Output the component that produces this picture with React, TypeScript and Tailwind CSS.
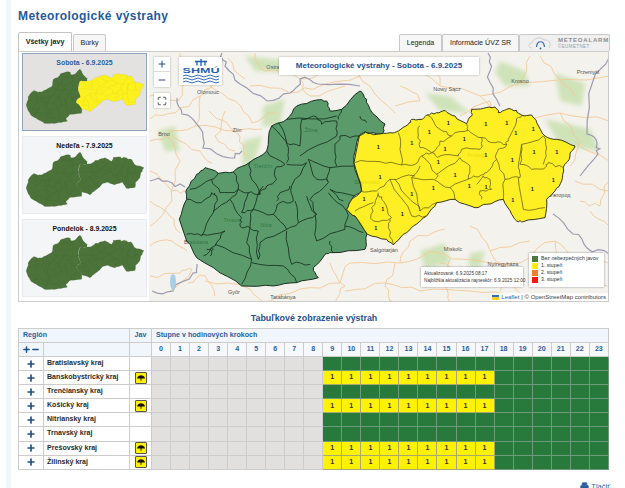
import React from "react";
import { Plus, Minus, Printer, Maximize } from "lucide-react";

const GREEN_OUTLINE =
  "28,400 50,340 50,310 80,265 105,245 145,262 190,258 240,228 290,195 305,120 350,100 380,60 440,42 470,45 480,75 515,70 570,15 590,40 600,70 645,114 639,141 621,144 585,138 567,150 552,231 576,315 546,339 531,369 555,390 591,444 585,490 485,500 465,505 430,545 445,575 380,590 310,600 215,600 130,545 80,515 50,465";

const GREEN_LINES = [
  "60,310 125,280 145,262",
  "50,340 95,350 125,320 140,330 130,380 95,450 50,445",
  "125,280 150,320 205,310 190,258",
  "205,310 180,340 130,375",
  "180,340 215,395 210,420 240,425",
  "205,310 235,320 270,325 240,265 240,228",
  "270,325 290,300 320,280 315,250 345,235 290,195",
  "235,320 215,380 250,370 280,300",
  "250,370 240,425 265,435 265,520",
  "250,370 310,385 330,350 370,345 365,300 410,230 350,235",
  "310,385 350,430 385,410 375,345",
  "360,300 330,320 320,345",
  "385,410 440,385 410,330",
  "440,385 420,340 475,290 480,245 415,220",
  "415,220 440,280 475,285",
  "350,435 365,535 420,535",
  "350,430 270,470 265,520",
  "240,425 230,470 245,520 215,595",
  "135,475 245,520",
  "100,510 135,480 165,435 95,445",
  "110,490 130,490 120,510",
  "245,530 340,540 380,590",
  "480,310 520,345",
  "475,320 530,375 525,430 440,465 435,385",
  "525,420 580,440",
  "490,500 480,465",
  "305,120 355,185 350,230",
  "325,110 350,170 390,180 395,100",
  "350,100 500,90",
  "395,100 430,90 455,115 500,105",
  "390,210 500,150 500,105",
  "500,240 495,185 510,150 570,150",
  "515,70 505,100",
  "570,90 590,110",
  "555,240 480,245",
  "555,330 480,310",
];

const YELLOW_OUTLINE =
  "58,105 75,92 110,100 150,95 175,90 205,70 215,55 240,55 260,42 290,35 315,28 345,45 380,68 395,45 395,25 430,22 465,18 475,35 500,25 530,28 545,42 575,42 590,65 615,105 650,115 705,135 690,165 670,200 665,240 645,270 620,295 615,350 550,362 530,360 515,340 490,295 440,310 405,320 345,295 290,305 260,345 220,375 190,400 160,432 140,415 82,400 45,345 20,325 35,295 65,270 42,185";

const YELLOW_LINES = [
  "44,185 120,182 185,192 225,190 245,165 275,155 300,120 335,105 300,85 262,42",
  "175,95 180,145 185,192",
  "240,75 235,100 240,140 275,155",
  "335,105 385,88 425,110 420,145 365,145 355,165 300,165 275,155",
  "380,68 385,88",
  "425,110 465,125 500,130 505,115 530,60 545,42",
  "500,130 475,145 470,175 495,235 540,230 535,200 545,130 610,105",
  "545,130 540,190 575,205 620,195 625,185 670,200",
  "610,105 620,140 610,190",
  "535,230 550,325 615,320",
  "495,235 490,295",
  "240,195 215,230 240,330 290,305",
  "215,230 280,235 330,260 345,295",
  "330,260 395,230 420,225 440,215 470,175",
  "360,170 390,195 385,235",
  "245,165 290,220 360,170",
  "290,220 285,235",
  "60,270 110,270 150,235 225,225",
  "150,235 215,345 258,345",
  "165,235 210,295 240,330",
  "115,275 95,320 100,360 155,350 130,300 115,280",
  "45,330 100,305",
  "150,355 145,380 160,430",
  "410,250 430,225 450,235 455,265 420,270 425,295",
];

const ONES = [
  [115, 137], [215, 127], [268, 93], [325, 67], [437, 70], [500, 65], [527, 97], [580, 83],
  [373, 115], [315, 145], [295, 183], [437, 162], [517, 178], [582, 152], [650, 152], [345, 222],
  [388, 255], [438, 257], [280, 260], [120, 228], [215, 280], [577, 263], [640, 237], [518, 298],
  [72, 295], [128, 323], [187, 340], [107, 380],
];

const ROADS = [
  "150,118 175,112 200,95 212,85 222,60",
  "210,85 235,100 252,122 275,112",
  "200,95 195,125 165,135 150,140",
  "195,125 235,130 262,128",
  "165,135 180,160 172,200 150,225",
  "150,170 172,190 188,190",
  "150,200 170,215 180,232",
  "150,245 172,240 187,250",
  "188,282 205,275 215,295",
  "150,275 180,272 192,268 170,290",
  "205,280 250,288 270,301",
  "260,301 300,288 340,282 350,262",
  "350,262 400,262 430,250 460,258 520,262",
  "345,290 385,282 420,290 470,290 520,295",
  "440,262 460,280 490,270 530,300",
  "400,262 410,240 445,228",
  "330,262 345,285 335,301",
  "395,262 385,285 395,301",
  "450,258 445,285 450,301",
  "490,250 505,270 500,290",
  "470,225 490,250 530,240",
  "520,262 555,240 575,258 609,262",
  "555,240 570,280 609,285",
  "255,52 265,70 300,78 345,62 390,58",
  "345,62 370,85 395,112",
  "400,60 440,85 480,95 520,82 609,75",
  "480,95 505,120 560,112 609,120",
  "440,85 435,55",
  "520,82 530,55",
  "505,120 490,100 460,115",
  "575,140 609,160",
  "575,180 609,190",
  "590,210 609,225",
  "250,85 290,92 320,85 360,75",
  "228,57 245,78",
  "209,110 240,135 245,155",
  "150,95 178,100 190,75 180,52",
  "172,135 200,150 212,162",
  "225,110 215,135 235,150",
  "300,78 310,95 345,85",
  "540,55 560,78 575,95",
  "560,112 580,140 570,165",
  "400,85 420,100 395,105",
  "580,200 600,205 609,180",
];

const BORDERS = [
  "222,52 225,65 240,83 267,100 290,92 300,78 318,83 360,85",
  "177,97 182,113 200,127 203,147 230,157 242,150",
  "150,180 167,180 185,186",
  "197,263 193,272 173,290 152,290",
  "488,52 490,70 493,93 500,105",
  "609,57 593,80 587,133 597,143 598,153 580,175",
  "553,213 573,233 587,247 609,253",
];

const FORESTS = [
  "500,60 525,70 530,85 505,85 495,72",
  "555,72 585,82 582,105 560,100",
  "545,118 590,128 600,150 560,145",
  "425,92 450,95 470,112 440,110",
  "420,250 445,242 450,262 425,268",
  "470,252 485,250 480,268 468,265",
  "263,105 285,98 280,125 262,125",
  "243,140 262,135 255,160 242,165",
  "245,55 290,60 300,72 255,70",
  "158,130 175,125 180,150 165,150",
];

const LABELS: [string, number, number][] = [
  ["Olomouc", 208, 93],
  ["Zlín", 237, 131],
  ["Brno", 164, 135],
  ["Ostrava", 276, 68],
  ["Nowy Sącz", 447, 90],
  ["Krosno", 520, 82],
  ["Przemyśl", 588, 73],
  ["Ужгород", 560, 196],
  ["Miskolc", 453, 250],
  ["Salgótarján", 384, 251],
  ["Nyíregyháza", 503, 265],
  ["Győr", 234, 293],
  ["Tatabánya", 283, 298],
  ["Žilina", 311, 131],
  ["Trenčín", 263, 167],
  ["Trnava", 232, 221],
  ["Nitra", 266, 226],
  ["Slovensko", 367, 183],
  ["Prešov", 476, 156],
  ["Bratislava", 196, 243],
];

// county borders are wiggly, so split each segment with a small sideways offset
const rough = (points: string, amp: number) => {
  let pts = points.split(" ").map((p) => p.split(",").map(Number));
  for (let pass = 0; pass < 2; pass++) {
    const next: number[][] = [];
    pts.forEach((p, i) => {
      next.push(p);
      const q = pts[i + 1];
      if (!q) return;
      const seed = Math.sin(p[0] * 12.9 + p[1] * 78.2 + q[0] * 37.7 + q[1] * 9.1) * 43758.5;
      const off = ((seed - Math.floor(seed)) * 2 - 1) * amp;
      const len = Math.hypot(q[0] - p[0], q[1] - p[1]) || 1;
      next.push([
        (p[0] + q[0]) / 2 + (-(q[1] - p[1]) / len) * off,
        (p[1] + q[1]) / 2 + ((q[0] - p[0]) / len) * off,
      ]);
    });
    pts = next;
  }
  return pts.map((p) => `${p[0].toFixed(1)},${p[1].toFixed(1)}`).join(" ");
};

type CountryProps = { allGreen?: boolean; thumb?: boolean };

// Slovakia, county outlines in crop coordinates, placed with two transforms
const Country = ({ allGreen, thumb }: CountryProps) => {
  const green = thumb ? "#4c7339" : "#2a7f42";
  const yellow = thumb ? "#fdf11d" : "#ffee00";
  const op = thumb ? 1 : 0.76;
  const lineC = thumb ? "#3a5a2c" : "#13281a";
  const w = thumb ? 1.4 : 2.4;
  return (
    <>
      <g transform="translate(170 85) scale(0.3333)">
        <polygon points={rough(GREEN_OUTLINE, 3)} fill={green} fillOpacity={op} stroke={lineC} strokeWidth={w * 1.2} strokeLinejoin="round" />
        {GREEN_LINES.map((p) => (
          <polyline key={p} points={rough(p, 5)} fill="none" stroke={lineC} strokeWidth={w} strokeLinejoin="round" />
        ))}
      </g>
      <g transform="translate(340 100) scale(0.3333)">
        <polygon
          points={rough(YELLOW_OUTLINE, 3)}
          fill={allGreen ? green : yellow}
          fillOpacity={thumb ? 1 : 0.85}
          stroke={allGreen ? "#3a5a2c" : thumb ? "#a39b18" : "#2a2a10"}
          strokeWidth={thumb ? w : 2.8}
          strokeLinejoin="round"
        />
        {YELLOW_LINES.map((p) => (
          <polyline
            key={p}
            points={rough(p, 5)}
            fill="none"
            stroke={allGreen ? "#3a5a2c" : thumb ? "#b5ad20" : "#4a4a10"}
            strokeWidth={thumb ? w : 2}
            strokeLinejoin="round"
          />
        ))}
      </g>
    </>
  );
};

const days = [
  { title: "Sobota - 6.9.2025", active: true },
  { title: "Nedeľa - 7.9.2025", active: false },
  { title: "Pondelok - 8.9.2025", active: false },
];

const regions = [
  { name: "Bratislavský kraj", warn: false },
  { name: "Banskobystrický kraj", warn: true },
  { name: "Trenčiansky kraj", warn: false },
  { name: "Košický kraj", warn: true },
  { name: "Nitriansky kraj", warn: false },
  { name: "Trnavský kraj", warn: false },
  { name: "Prešovský kraj", warn: true },
  { name: "Žilinský kraj", warn: true },
];

const hours = Array.from({ length: 24 }, (_, i) => i);

const legendRows = [
  { label: "Bez nebezpečných javov", color: "bg-[#4a7a3c]" },
  { label: "1. stupeň", color: "bg-[#ffee11]" },
  { label: "2. stupeň", color: "bg-[#f08030]" },
  { label: "3. stupeň", color: "bg-[#ff1414]" },
];

const MapDrawing = () => (
  <svg width="460" height="250" viewBox="149 51 460 250" className="block">
    <defs>
      <filter id="soft">
        <feGaussianBlur stdDeviation="2" />
      </filter>
    </defs>
    <rect x="149" y="51" width="460" height="250" fill="#f4f2ed" />
    <g filter="url(#soft)">
      {FORESTS.map((p) => (
        <polygon key={p} points={p} fill="#cfe3b9" />
      ))}
    </g>
    {ROADS.map((p) => (
      <polyline key={p} points={rough(p, 3)} fill="none" stroke="#f3c896" strokeWidth="0.9" />
    ))}
    {BORDERS.map((p) => (
      <polyline key={p} points={rough(p, 3)} fill="none" stroke="#9d9bb2" strokeWidth="1.2" />
    ))}
    <ellipse cx="173" cy="281" rx="3" ry="8" fill="#a9cfe8" />
    {LABELS.map(([t, x, y]) => (
      <text key={t} x={x} y={y} textAnchor="middle" fontSize="5.5" fill="#555" fontFamily="Liberation Sans, sans-serif">
        {t}
      </text>
    ))}
    <Country />
    {ONES.map(([x, y], i) => (
      <text
        key={i}
        x={340 + x / 3}
        y={102 + y / 3}
        textAnchor="middle"
        fontSize="5.5"
        fontWeight="700"
        fill="#222"
        fontFamily="Liberation Sans, sans-serif"
      >
        1
      </text>
    ))}
  </svg>
);

const UmbrellaBadge = () => (
  <span className="mx-auto flex h-[12px] w-[12px] items-center justify-center rounded-[1px] border border-[#555] bg-[#fff200]">
    <svg width="8" height="8" viewBox="0 0 10 10">
      <path d="M0 5.500 C0.500 2.500 3 1.500 5 1.500 C7 1.500 9.500 2.500 10 5.500 Z" fill="#111" />
      <rect x="4.400" y="5" width="1.200" height="3.500" fill="#111" />
    </svg>
  </span>
);

export default function App() {
  return (
    <div className="h-[488px] w-[625px] overflow-hidden bg-white font-['Liberation_Sans',Arial,sans-serif]">
      <div className="ml-[6px] h-full w-[611px] bg-[#f1f6fd] pl-[5px]">
        <div className="h-full w-[606px] bg-white pl-[7px] pr-[7px]">
          <h1 className="pt-[8px] text-[12px] font-bold leading-[16px] tracking-[0.42px] text-[#1f5a9c]">
            Meteorologické výstrahy
          </h1>

          {/* Tabs */}
          <div className="mt-[8px] flex h-[19px] items-end text-[7.1px] text-[#222]">
            <div className="flex h-[19px] w-[54px] items-center justify-center rounded-t-[2px] border border-b-0 border-[#c4c4c4] bg-white font-bold">
              Všetky javy
            </div>
            <div className="ml-[1px] flex h-[17px] w-[33px] items-center justify-center rounded-t-[2px] border border-b-0 border-[#c8c8c8] bg-[#f6f6f6]">
              Búrky
            </div>
            <div className="ml-auto flex h-[17px] w-[43px] items-center justify-center rounded-t-[2px] border border-b-0 border-[#c8c8c8] bg-[#f6f6f6]">
              Legenda
            </div>
            <div className="flex h-[17px] w-[77px] items-center justify-center rounded-t-[2px] border border-b-0 border-[#c8c8c8] bg-[#f6f6f6]">
              Informácie ÚVZ SR
            </div>
            <div className="flex h-[17px] w-[91px] items-center gap-[5px] rounded-t-[2px] border border-b-0 border-[#c8c8c8] bg-[#f0f0f0] pl-[8px]">
              <svg width="25" height="14" viewBox="0 0 25 14">
                <path d="M4 12 C0 12 0 7 4 7 C5 2 13 0 16 4 C21 3 24 8 21 12" fill="none" stroke="#cfcfcf" strokeWidth="1" />
                <path d="M8.500 11 C9 4 16 4 16.500 11" fill="none" stroke="#2d6ea8" strokeWidth="1.200" />
                <circle cx="12.500" cy="12.500" r="0.900" fill="#2d6ea8" />
              </svg>
              <div className="flex flex-col">
                <span className="text-[6px] font-bold leading-[7px] tracking-[0.8px] text-[#8c8c8c]">METEOALARM</span>
                <span className="text-[4.5px] leading-[5px] tracking-[0.4px] text-[#9a9a9a]">©EUMETNET</span>
              </div>
            </div>
          </div>

          {/* Map panel */}
          <div className="flex h-[251px] w-[591px] border border-[#cccccc] bg-white">
            <div className="flex w-[130px] shrink-0 flex-col gap-[5px] pl-[3px] pr-[2px] pt-[1px]">
              {days.map((d) => (
                <div
                  key={d.title}
                  className={`flex h-[78px] flex-col items-center border pt-[4px] ${
                    d.active ? "border-[#8fa5c0] bg-[#e3e2e0]" : "border-[#e8eaed] bg-[#f4f5f6]"
                  }`}
                >
                  <span className={`text-[6.9px] font-bold leading-[10px] ${d.active ? "text-[#2a5f9e]" : "text-[#111]"}`}>
                    {d.title}
                  </span>
                  <svg width="118" height="55" viewBox="179 89 396 198" preserveAspectRatio="none" className="mt-[1px]">
                    <Country thumb allGreen={!d.active} />
                  </svg>
                </div>
              ))}
            </div>

            <div className="relative flex-1 overflow-hidden">
              <MapDrawing />

              {/* Leaflet controls over the map */}
              <div className="absolute left-[5px] top-[5px] flex w-[16px] flex-col bg-white text-[#1f4f8f] shadow-[0_0_2px_rgba(0,0,0,0.3)]">
                <div className="flex h-[15px] items-center justify-center border-b border-[#ddd]">
                  <Plus size={10} strokeWidth={2.6} />
                </div>
                <div className="flex h-[15px] items-center justify-center">
                  <Minus size={10} strokeWidth={2.6} />
                </div>
              </div>
              <div className="absolute left-[5px] top-[41px] flex h-[15px] w-[16px] items-center justify-center bg-white text-[#333] shadow-[0_0_2px_rgba(0,0,0,0.3)]">
                <Maximize size={10} strokeWidth={2} />
              </div>
              <div className="absolute left-[30px] top-[5px] flex h-[28px] w-[43px] flex-col items-center bg-white shadow-[0_0_2px_rgba(0,0,0,0.3)]">
                <svg width="38" height="26" viewBox="0 0 38 26" className="mt-[1px]">
                  <path d="M13 3.500h12M19 1v7M15 3.500v4M23 3.500v4" stroke="#1c5fb5" strokeWidth="1.300" fill="none" />
                  <text x="19" y="15" textAnchor="middle" fontSize="8" fontWeight="700" textLength="37" lengthAdjust="spacingAndGlyphs" fill="#1c5fb5" fontFamily="Liberation Sans, sans-serif">
                    SHMÚ
                  </text>
                  <path d="M1 18q3-2 6 0t6 0 6 0 6 0 6 0 6 0M1 21q3-2 6 0t6 0 6 0 6 0 6 0 6 0M1 24q3-2 6 0t6 0 6 0 6 0 6 0 6 0" stroke="#1c5fb5" strokeWidth="0.900" fill="none" />
                </svg>
              </div>
              <div className="absolute left-[130px] top-[5px] flex h-[18px] w-[200px] items-center justify-center bg-white text-[8px] font-bold text-[#1f4f8f] shadow-[0_0_2px_rgba(0,0,0,0.3)]">
                Meteorologické výstrahy - Sobota - 6.9.2025
              </div>
              <div className="absolute left-[272px] top-[215px] flex h-[20px] w-[102px] flex-col justify-center whitespace-nowrap bg-white pl-[3px] text-[4.7px] leading-[7px] text-[#333] shadow-[0_0_2px_rgba(0,0,0,0.4)]">
                <span>Aktualizované: 6.9.2025 08:17</span>
                <span>Najbližšia aktualizácia najneskôr: 6.9.2025 12:00</span>
              </div>
              <div className="absolute left-[380px] top-[201px] flex h-[34px] w-[75px] flex-col gap-[1px] bg-white pl-[3px] pt-[3px] shadow-[0_0_2px_rgba(0,0,0,0.4)]">
                {legendRows.map((r) => (
                  <div key={r.label} className="flex h-[6px] items-center gap-[3px] text-[5.2px] text-[#333]">
                    <span className={`h-[6px] w-[6px] ${r.color}`} />
                    {r.label}
                  </div>
                ))}
              </div>
              <div className="absolute bottom-0 right-0 flex h-[8px] items-center gap-[2px] bg-white/80 px-[2px] text-[6px] text-[#444]">
                <span className="inline-block h-[5px] w-[7px] bg-[linear-gradient(#2f6fc0_50%,#f7d12a_50%)]" />
                <span className="text-[#2a6fb5]">Leaflet</span>
                <span>| © OpenStreetMap contributors</span>
              </div>
            </div>
          </div>

          <h2 className="mt-[10px] text-center text-[8.9px] font-bold leading-[12px] text-[#1f4f8f]">
            Tabuľkové zobrazenie výstrah
          </h2>

          {/* Hour table */}
          <table className="mt-[4px] w-[591px] table-fixed border-collapse text-[7.1px] font-bold">
            <colgroup>
              <col className="w-[25px]" />
              <col className="w-[86px]" />
              <col className="w-[22px]" />
              {hours.map((h) => (
                <col key={h} />
              ))}
            </colgroup>
            <thead className="text-[#2a5f9e]">
              <tr className="h-[14px] bg-[#f1f6fc]">
                <th colSpan={2} className="border border-[#cccccc] pl-[4px] text-left font-bold">Región</th>
                <th className="border border-[#cccccc] font-bold">Jav</th>
                <th colSpan={24} className="border border-[#cccccc] pl-[4px] text-left font-bold">Stupne v hodinových krokoch</th>
              </tr>
              <tr className="h-[14px]">
                <th className="border border-[#cccccc] bg-[#f1f6fc]">
                  <span className="flex items-center justify-center text-[#1f4f8f]">
                    <Plus size={9} strokeWidth={4} />
                    <Minus size={9} strokeWidth={4} />
                  </span>
                </th>
                <th className="border border-[#cccccc] bg-[#f1f6fc]" />
                <th className="border border-[#cccccc] bg-[#f1f6fc]" />
                {hours.map((h) => (
                  <th key={h} className="border border-[#cccccc] bg-[#f6f8fb] font-bold text-[#2a5f9e]">{h}</th>
                ))}
              </tr>
            </thead>
            <tbody>
              {regions.map((r) => (
                <tr key={r.name} className="h-[14.100px]">
                  <td className="border border-[#cccccc] p-0 text-[#1f4f8f]">
                    <Plus size={10} strokeWidth={4} className="mx-auto" />
                  </td>
                  <td className="border border-[#cccccc] pl-[3px] leading-none text-[#2b2b2b]">{r.name}</td>
                  <td className="border border-[#cccccc] p-0">{r.warn && <UmbrellaBadge />}</td>
                  {hours.map((h) =>
                    h < 9 ? (
                      <td key={h} className="border border-[#cccccc] bg-[#e1e0de]" />
                    ) : r.warn && h < 18 ? (
                      <td key={h} className="border border-[#a8a870] bg-[#fff200] text-center text-[#333]">1</td>
                    ) : (
                      <td key={h} className="border border-[#6f9a7c] bg-[#277a3c]" />
                    )
                  )}
                </tr>
              ))}
            </tbody>
          </table>

          <div className="mt-[11px] flex items-center justify-end gap-[2px] text-[7.5px] text-[#2a5f9e]">
            <Printer size={9} fill="#2a5f9e" />
            Tlačiť
          </div>
        </div>
      </div>
    </div>
  );
}
